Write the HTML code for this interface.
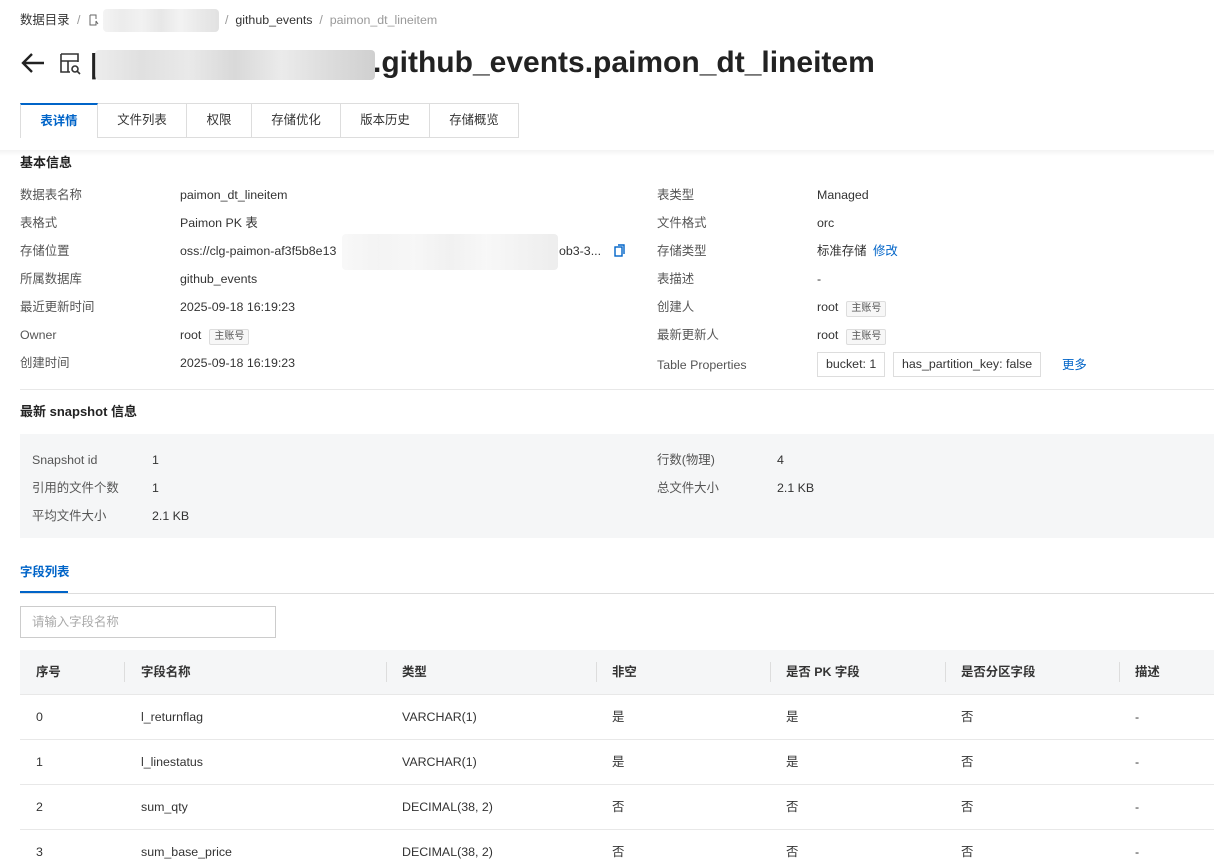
<!DOCTYPE html><html><head><meta charset="utf-8"><style>
*{margin:0;padding:0;box-sizing:border-box}
body{width:1214px;height:865px;overflow:hidden;background:#fff;font-family:"Liberation Sans","Noto Sans CJK SC",sans-serif;font-size:12.4px;color:#333;position:relative}
.a{position:absolute;white-space:nowrap;line-height:16px}
.g{color:#555}
.tag{display:inline-block;border:1px solid #ddd;background:#f7f7f7;border-radius:2px;font-size:10px;padding:0 4px;line-height:14px;margin-left:8px;color:#555}
.blur{position:absolute;background:linear-gradient(90deg,#e8e8e8,#d8d8d8,#e4e4e4,#cfcfcf,#e6e6e6,#d4d4d4,#c4c4c4);border-radius:4px}
.tab{position:absolute;top:103px;height:35px;border:1px solid #ddd;border-left:none;text-align:center;line-height:33px;font-size:12.4px;color:#333;background:#fff}
.th{position:absolute;top:650px;height:44px;left:20px;width:1194px;background:#f5f6f7}
.sep{position:absolute;top:662px;width:1px;height:20px;background:#ddd}
.rl{position:absolute;left:20px;width:1194px;height:1px;background:#e8e8e8}
</style></head><body>
<div class="a" style="left:20px;top:12px;color:#333">数据目录 <span style="color:#999;margin:0 4px">/</span></div>
<svg class="a" style="left:88px;top:14px" width="12" height="12" viewBox="0 0 12 12" fill="none" stroke="#666"><path d="M2 1h6v4M2 1v10h4M8 7v4h-2M8 7l2 3"/></svg>
<div class="blur" style="left:103px;top:9px;width:116px;height:23px;opacity:.5"></div>
<div class="a" style="left:225px;top:12px"><span style="color:#999">/</span> &nbsp;github_events &nbsp;<span style="color:#999">/</span> &nbsp;<span style="color:#999">paimon_dt_lineitem</span></div>
<svg class="a" style="left:20px;top:52px" width="26" height="22" viewBox="0 0 26 22" fill="none" stroke="#222" stroke-width="2.4"><path d="M24 11H3M12 2l-9 9 9 9"/></svg>
<svg class="a" style="left:60px;top:53px" width="22" height="22" viewBox="0 0 22 22" fill="none" stroke="#333" stroke-width="1.6"><path d="M1 1h17v8M1 1v18h9M1 8h17M8 8v11"/><circle cx="15" cy="16" r="3"/><path d="M17 18l3 3"/></svg>
<div class="a" style="left:90px;top:48px;font-size:28px;line-height:32px;font-weight:bold;color:#222">|</div>
<div class="blur" style="left:95px;top:50px;width:280px;height:30px;opacity:.8"></div>
<div class="a" style="left:373px;top:45px;font-size:30px;line-height:36px;font-weight:bold;color:#222">.github_events.paimon_dt_lineitem</div>
<div class="tab" style="left:20px;width:78px;border-left:1px solid #ddd;border-top:2px solid #0064c8;border-bottom:none;color:#0064c8;font-weight:bold;z-index:2">表详情</div>
<div class="tab" style="left:98px;width:89px">文件列表</div>
<div class="tab" style="left:187px;width:65px">权限</div>
<div class="tab" style="left:252px;width:89px">存储优化</div>
<div class="tab" style="left:341px;width:89px">版本历史</div>
<div class="tab" style="left:430px;width:89px">存储概览</div>
<div style="position:absolute;left:0;top:150px;width:1214px;height:6px;background:linear-gradient(#f3f3f3,#fff)"></div>
<div class="a" style="left:20px;top:155px;font-size:13px;font-weight:bold;color:#222">基本信息</div>
<div class="a g" style="left:20px;top:187px">数据表名称</div><div class="a" style="left:180px;top:187px">paimon_dt_lineitem</div>
<div class="a g" style="left:20px;top:215px">表格式</div><div class="a" style="left:180px;top:215px">Paimon PK 表</div>
<div class="a g" style="left:20px;top:243px">存储位置</div><div class="a" style="left:180px;top:243px">oss://clg-paimon-af3f5b8e13</div>
<div class="blur" style="left:342px;top:234px;width:216px;height:36px;opacity:.3"></div>
<div class="a" style="left:559px;top:243px">ob3-3...</div>
<svg class="a" style="left:614px;top:244px" width="12" height="13" viewBox="0 0 12 13" fill="none" stroke="#0064c8" stroke-width="1.4"><rect x="1" y="3" width="7" height="9"/><path d="M4 1h6v9"/></svg>
<div class="a g" style="left:20px;top:271px">所属数据库</div><div class="a" style="left:180px;top:271px">github_events</div>
<div class="a g" style="left:20px;top:299px">最近更新时间</div><div class="a" style="left:180px;top:299px">2025-09-18 16:19:23</div>
<div class="a g" style="left:20px;top:327px">Owner</div><div class="a" style="left:180px;top:327px">root<span class="tag">主账号</span></div>
<div class="a g" style="left:20px;top:355px">创建时间</div><div class="a" style="left:180px;top:355px">2025-09-18 16:19:23</div>
<div class="a g" style="left:657px;top:187px">表类型</div><div class="a" style="left:817px;top:187px">Managed</div>
<div class="a g" style="left:657px;top:215px">文件格式</div><div class="a" style="left:817px;top:215px">orc</div>
<div class="a g" style="left:657px;top:243px">存储类型</div><div class="a" style="left:817px;top:243px">标准存储 <span style="color:#0064c8;margin-left:3px">修改</span></div>
<div class="a g" style="left:657px;top:271px">表描述</div><div class="a" style="left:817px;top:271px">-</div>
<div class="a g" style="left:657px;top:299px">创建人</div><div class="a" style="left:817px;top:299px">root<span class="tag">主账号</span></div>
<div class="a g" style="left:657px;top:327px">最新更新人</div><div class="a" style="left:817px;top:327px">root<span class="tag">主账号</span></div>
<div class="a g" style="left:657px;top:357px">Table Properties</div>
<div class="a" style="left:817px;top:352px;border:1px solid #ddd;padding:0 8px;line-height:23px;height:25px">bucket: 1</div>
<div class="a" style="left:893px;top:352px;border:1px solid #ddd;padding:0 8px;line-height:23px;height:25px">has_partition_key: false</div>
<div class="a" style="left:1062px;top:357px;color:#0064c8">更多</div>
<div class="rl" style="top:389px"></div>
<div class="a" style="left:20px;top:404px;font-size:13px;font-weight:bold;color:#222">最新 snapshot 信息</div>
<div style="position:absolute;left:20px;top:434px;width:1194px;height:104px;background:#f5f6f7"></div>
<div class="a g" style="left:32px;top:452px">Snapshot id</div><div class="a" style="left:152px;top:452px">1</div>
<div class="a g" style="left:32px;top:480px">引用的文件个数</div><div class="a" style="left:152px;top:480px">1</div>
<div class="a g" style="left:32px;top:508px">平均文件大小</div><div class="a" style="left:152px;top:508px">2.1 KB</div>
<div class="a g" style="left:657px;top:452px">行数(物理)</div><div class="a" style="left:777px;top:452px">4</div>
<div class="a g" style="left:657px;top:480px">总文件大小</div><div class="a" style="left:777px;top:480px">2.1 KB</div>
<div class="a" style="left:20px;top:564px;color:#0064c8;font-weight:bold">字段列表</div>
<div class="rl" style="top:593px;background:#ddd"></div>
<div style="position:absolute;left:20px;top:591px;width:48px;height:2px;background:#0064c8"></div>
<div style="position:absolute;left:20px;top:606px;width:256px;height:32px;border:1px solid #ccc"></div>
<div class="a" style="left:32px;top:614px;color:#aaa">请输入字段名称</div>
<div class="th"></div>
<div class="sep" style="left:124px"></div><div class="sep" style="left:386px"></div><div class="sep" style="left:596px"></div><div class="sep" style="left:770px"></div><div class="sep" style="left:945px"></div><div class="sep" style="left:1119px"></div>
<div class="a" style="left:36px;top:664px;font-weight:bold">序号</div>
<div class="a" style="left:141px;top:664px;font-weight:bold">字段名称</div>
<div class="a" style="left:402px;top:664px;font-weight:bold">类型</div>
<div class="a" style="left:612px;top:664px;font-weight:bold">非空</div>
<div class="a" style="left:786px;top:664px;font-weight:bold">是否 PK 字段</div>
<div class="a" style="left:961px;top:664px;font-weight:bold">是否分区字段</div>
<div class="a" style="left:1135px;top:664px;font-weight:bold">描述</div>
<div class="rl" style="top:694px"></div>
<div class="a" style="left:36px;top:709px">0</div><div class="a" style="left:141px;top:709px">l_returnflag</div><div class="a" style="left:402px;top:709px">VARCHAR(1)</div><div class="a" style="left:612px;top:709px">是</div><div class="a" style="left:786px;top:709px">是</div><div class="a" style="left:961px;top:709px">否</div><div class="a" style="left:1135px;top:709px">-</div>
<div class="rl" style="top:739px"></div>
<div class="a" style="left:36px;top:754px">1</div><div class="a" style="left:141px;top:754px">l_linestatus</div><div class="a" style="left:402px;top:754px">VARCHAR(1)</div><div class="a" style="left:612px;top:754px">是</div><div class="a" style="left:786px;top:754px">是</div><div class="a" style="left:961px;top:754px">否</div><div class="a" style="left:1135px;top:754px">-</div>
<div class="rl" style="top:784px"></div>
<div class="a" style="left:36px;top:799px">2</div><div class="a" style="left:141px;top:799px">sum_qty</div><div class="a" style="left:402px;top:799px">DECIMAL(38, 2)</div><div class="a" style="left:612px;top:799px">否</div><div class="a" style="left:786px;top:799px">否</div><div class="a" style="left:961px;top:799px">否</div><div class="a" style="left:1135px;top:799px">-</div>
<div class="rl" style="top:829px"></div>
<div class="a" style="left:36px;top:844px">3</div><div class="a" style="left:141px;top:844px">sum_base_price</div><div class="a" style="left:402px;top:844px">DECIMAL(38, 2)</div><div class="a" style="left:612px;top:844px">否</div><div class="a" style="left:786px;top:844px">否</div><div class="a" style="left:961px;top:844px">否</div><div class="a" style="left:1135px;top:844px">-</div>
</body></html>
